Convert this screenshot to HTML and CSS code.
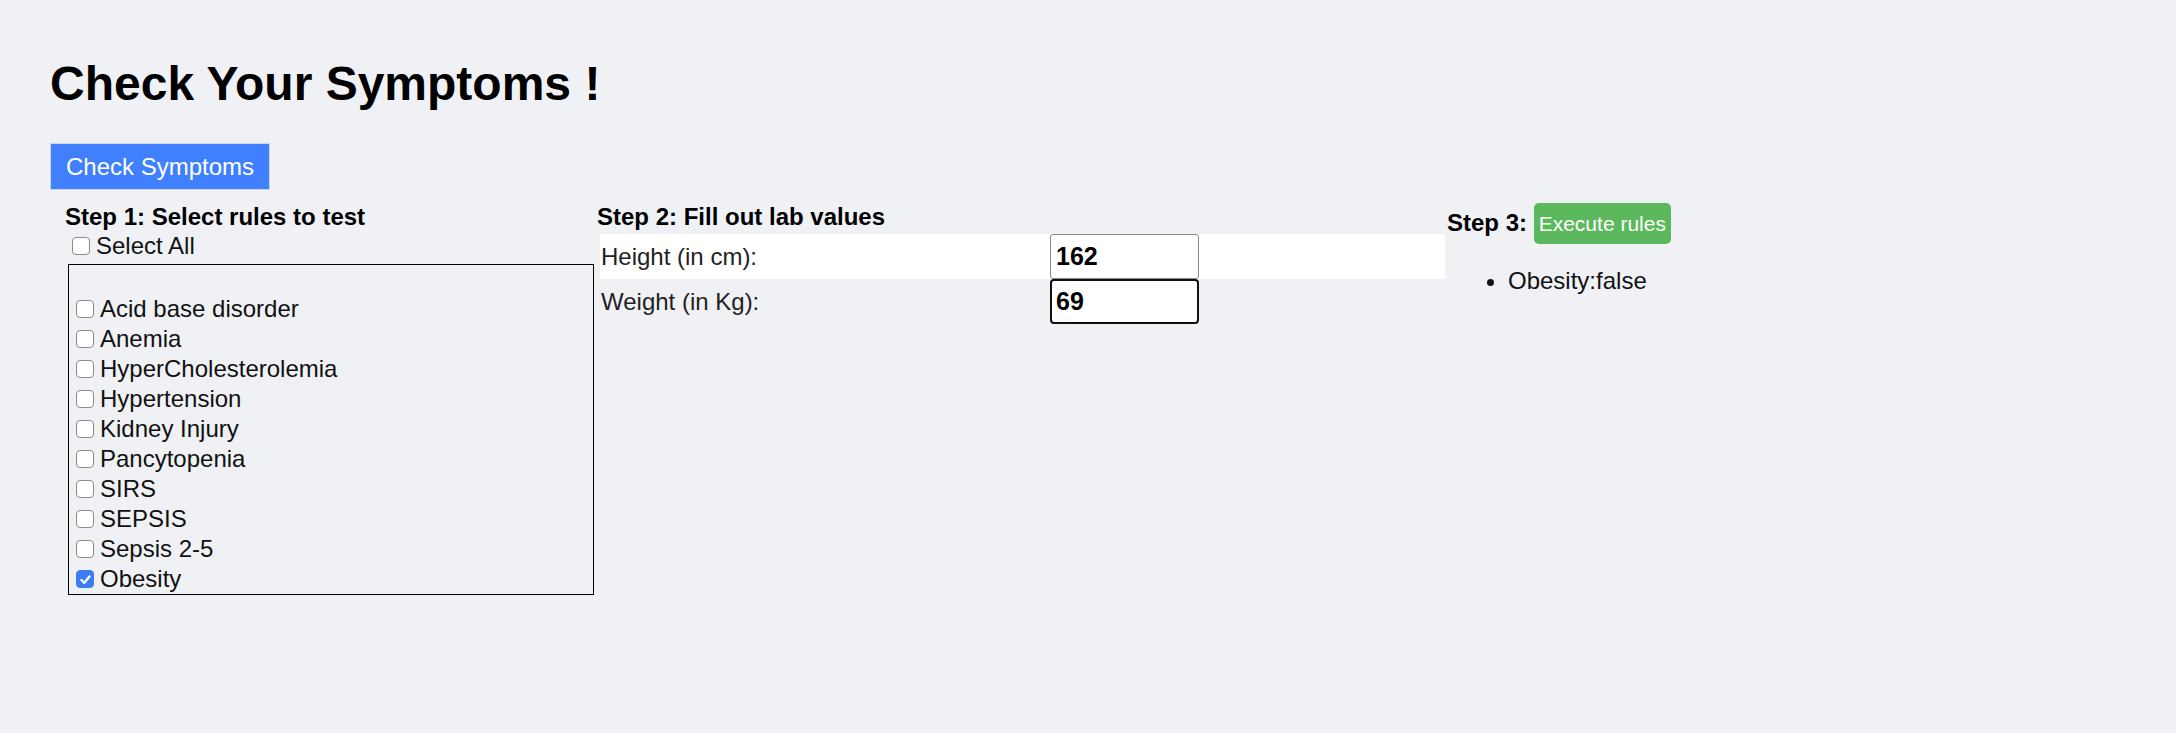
FILE: index.html
```html
<html>
<head>
<link rel="stylesheet" href="styles.css">
</head>
<body>
<div class="page">
  <h1>Check Your Symptoms !</h1>
  <button class="btn-check">Check Symptoms</button>

  <div class="steps">
    <div class="step step-rules">
      <div class="step__title">Step 1: Select rules to test</div>
      <label class="rule rule--all"><input type="checkbox" class="rule__input"><span class="rule__box"></span>Select All</label>
      <div class="rules-list">
        <label class="rule"><input type="checkbox" class="rule__input"><span class="rule__box"></span>Acid base disorder</label>
        <label class="rule"><input type="checkbox" class="rule__input"><span class="rule__box"></span>Anemia</label>
        <label class="rule"><input type="checkbox" class="rule__input"><span class="rule__box"></span>HyperCholesterolemia</label>
        <label class="rule"><input type="checkbox" class="rule__input"><span class="rule__box"></span>Hypertension</label>
        <label class="rule"><input type="checkbox" class="rule__input"><span class="rule__box"></span>Kidney Injury</label>
        <label class="rule"><input type="checkbox" class="rule__input"><span class="rule__box"></span>Pancytopenia</label>
        <label class="rule"><input type="checkbox" class="rule__input"><span class="rule__box"></span>SIRS</label>
        <label class="rule"><input type="checkbox" class="rule__input"><span class="rule__box"></span>SEPSIS</label>
        <label class="rule"><input type="checkbox" class="rule__input"><span class="rule__box"></span>Sepsis 2-5</label>
        <label class="rule"><input type="checkbox" class="rule__input" checked><span class="rule__box"><svg width="13" height="13" viewBox="0 0 13 13" fill="none" stroke="#fff" stroke-width="2.4" stroke-linecap="round" stroke-linejoin="round"><path d="M2.5 7l2.8 2.8L10.5 3.5"/></svg></span>Obesity</label>
      </div>
    </div>

    <div class="step step-labs">
      <div class="step__title">Step 2: Fill out lab values</div>
      <div class="labs">
        <div class="labs__row labs__row--odd">
          <span class="labs__label">Height (in cm):</span>
          <input type="text" class="labs__input" value="162">
        </div>
        <div class="labs__row">
          <span class="labs__label">Weight (in Kg):</span>
          <input type="text" class="labs__input labs__input--focus" value="69">
        </div>
      </div>
    </div>

    <div class="step step-run">
      <div class="step__title step__title--inline">Step 3: <button class="btn-run">Execute rules</button></div>
      <ul class="results">
        <li>Obesity:false</li>
      </ul>
    </div>
  </div>
</div>
</body>
</html>
```

FILE: styles.css
```css
/* reset */
* {
  box-sizing: border-box;
}

body {
  margin: 0;
  background-color: #f0f1f5;
  font-family: "Liberation Sans", Arial, sans-serif;
  color: #000;
}

.page {
  padding: 56px 50px 0;
}

h1 {
  margin: 0;
  font-size: 48px;
  line-height: 55px;
  font-weight: bold;
}

.btn-check {
  display: block;
  margin-top: 32px;
  padding: 9px 15px;
  background-color: #4080ff;
  border: 1px solid #d3d6de;
  color: #fff;
  font-family: inherit;
  font-size: 24px;
  line-height: 27px;
}

/* three step columns */
.steps {
  display: flex;
  margin-top: 13px;
  padding-left: 15px;
}

.step-rules {
  width: 532px;
}

.step-labs {
  width: 850px;
}

.step-run {
  flex: 1;
}

.step__title {
  font-size: 24px;
  line-height: 28px;
  font-weight: bold;
}

/* step 1 */
.rule {
  display: flex;
  align-items: center;
  height: 30px;
  font-size: 24px;
  line-height: 30px;
  color: #111;
}

.rule__input {
  display: none;
}

.rule__box {
  display: flex;
  flex-shrink: 0;
  align-items: center;
  justify-content: center;
  width: 18px;
  height: 18px;
  margin: 0 6px 0 7px;
  border: 1.5px solid #8a8a8a;
  border-radius: 4px;
  background-color: #fff;
}

.rule__input:checked + .rule__box {
  background-color: #3e7cf3;
  border-color: #3e7cf3;
}

.rules-list {
  width: 526px;
  margin: 3px 0 0 3px;
  padding-top: 29px;
  border: 1px solid #000;
}

/* step 2 */
.labs {
  margin: 3px 0 0 3px;
  width: 845px;
}

.labs__row {
  display: flex;
  align-items: center;
  height: 45px;
}

.labs__row--odd {
  background-color: #fff;
}

.labs__row + .labs__row {
  height: 46px;
}

.labs__label {
  width: 450px;
  padding-left: 1px;
  font-size: 24px;
  color: #222;
}

.labs__input {
  width: 149px;
  height: 45px;
  padding: 0 5px;
  border: 1px solid #8a8a8a;
  border-radius: 3px;
  background-color: #fff;
  font-family: inherit;
  font-size: 25px;
  font-weight: bold;
  color: #000;
}

.labs__input--focus {
  border: 2px solid #101010;
  border-radius: 4px;
  padding: 0 4px;
  margin-top: -1px;
}

/* step 3 */
.btn-run {
  display: inline-block;
  padding: 8px 5px;
  background-color: #5cb85c;
  border: 0;
  border-radius: 5px;
  color: #fff;
  font-family: inherit;
  font-size: 21px;
  line-height: 25px;
}

.results {
  margin: 23px 0 0;
  padding-left: 61px;
  font-size: 24px;
  line-height: 27px;
  color: #111;
}
```
